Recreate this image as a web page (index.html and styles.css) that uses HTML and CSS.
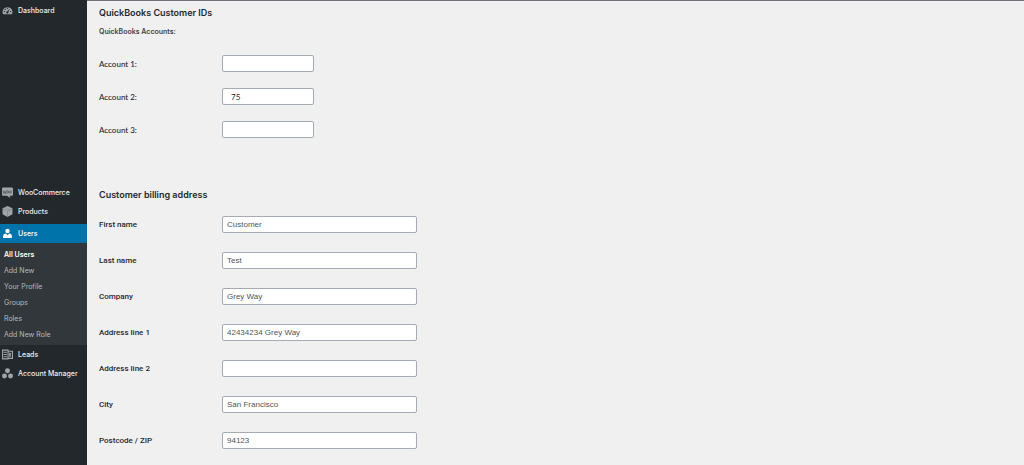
FILE: index.html
```html
<!DOCTYPE html>
<html lang="en">

<head>
    <meta charset="UTF-8">
    <meta name="viewport" content="width=device-width, initial-scale=1.0">
    <title>Edit User</title>
    <link rel="stylesheet" href="styles.css">
</head>

<body>
    <nav class="admin-menu">
        <ul class="menu menu-top">
            <li>
                <a href="#">
                    <svg class="icon" viewBox="0 0 20 20"><path d="M2 17a9 9 0 1 1 16 0z"/><g fill="#23282d"><circle cx="4.5" cy="12" r="1.2"/><circle cx="6" cy="8" r="1.2"/><circle cx="10" cy="6" r="1.2"/><circle cx="15.5" cy="12" r="1.2"/><path d="M14.500 6.500l-3 6a2 2 0 1 1-2-1z"/></g></svg>
                    Dashboard
                </a>
            </li>
        </ul>
        <ul class="menu">
            <li>
                <a href="#">
                    <svg class="icon" viewBox="0 0 20 20"><path d="M2 1h16a2 2 0 0 1 2 2v11a2 2 0 0 1-2 2h-4l1 4-6-4H2a2 2 0 0 1-2-2V3a2 2 0 0 1 2-2z"/><path d="M2 6l1.500 6L5 8l1.500 4L8 6M9 9a1.500 2.500 0 1 0 3 0 1.500 2.500 0 1 0-3 0M14 9a1.500 2.500 0 1 0 3 0 1.500 2.500 0 1 0-3 0" fill="none" stroke="#555a60" stroke-width="1.500"/></svg>
                    WooCommerce
                </a>
            </li>
            <li>
                <a href="#">
                    <svg class="icon" viewBox="0 0 20 20"><path d="M10 0l9 4v11l-9 5-9-5V4z"/><path d="M1 5l9 4 9-4M10 9v11M5 2l9 5v3" fill="none" stroke="#7c8187"/></svg>
                    Products
                </a>
            </li>
            <li class="current">
                <a href="#">
                    <svg class="icon" viewBox="0 0 20 20"><circle cx="10" cy="5.500" r="4"/><path d="M2 18v-3c0-3 2-5 5-5l3 3 3-3c3 0 5 2 5 5v3z"/></svg>
                    Users
                </a>
                <ul class="submenu">
                    <li><a class="active" href="#">All Users</a></li>
                    <li><a href="#">Add New</a></li>
                    <li><a href="#">Your Profile</a></li>
                    <li><a href="#">Groups</a></li>
                    <li><a href="#">Roles</a></li>
                    <li><a href="#">Add New Role</a></li>
                </ul>
            </li>
            <li>
                <a href="#">
                    <svg class="icon" viewBox="0 0 20 20"><path d="M1 2h10v16H1zM11 4h8v13h-8" fill="none" stroke="#a0a5aa" stroke-width="2"/><path d="M3 5h6v2H3zM3 9h6v2H3zM3 13h6v2H3zM13 7h3v7h-3z"/></svg>
                    Leads
                </a>
            </li>
            <li>
                <a href="#">
                    <svg class="icon" viewBox="0 0 20 20"><circle cx="10" cy="5" r="4.500"/><circle cx="4.500" cy="14.500" r="4.500"/><circle cx="15.500" cy="14.500" r="4.500"/></svg>
                    Account Manager
                </a>
            </li>
        </ul>
    </nav>

    <main class="content">
        <form>
            <section class="accounts">
                <h2>QuickBooks Customer IDs</h2>
                <h3>QuickBooks Accounts:</h3>
                <div class="row">
                    <label for="account1">Account 1:</label>
                    <input id="account1" type="text" value="">
                </div>
                <div class="row">
                    <label for="account2">Account 2:</label>
                    <input id="account2" type="text" value="75">
                </div>
                <div class="row">
                    <label for="account3">Account 3:</label>
                    <input id="account3" type="text" value="">
                </div>
            </section>

            <section class="billing">
                <h2>Customer billing address</h2>
                <div class="row">
                    <label for="first-name">First name</label>
                    <input id="first-name" type="text" value="Customer">
                </div>
                <div class="row">
                    <label for="last-name">Last name</label>
                    <input id="last-name" type="text" value="Test">
                </div>
                <div class="row">
                    <label for="company">Company</label>
                    <input id="company" type="text" value="Grey Way">
                </div>
                <div class="row">
                    <label for="address1">Address line 1</label>
                    <input id="address1" type="text" value="42434234 Grey Way">
                </div>
                <div class="row">
                    <label for="address2">Address line 2</label>
                    <input id="address2" type="text" value="">
                </div>
                <div class="row">
                    <label for="city">City</label>
                    <input id="city" type="text" value="San Francisco">
                </div>
                <div class="row">
                    <label for="postcode">Postcode / ZIP</label>
                    <input id="postcode" type="text" value="94123">
                </div>
            </section>
        </form>
    </main>
</body>

</html>
```
FILE: styles.css
```css
* {
    box-sizing: border-box;
}

body {
    display: flex;
    min-height: 100vh;
    margin: 0;
    background: #f0f0f0;
    color: #23282d;
    font-family: Inter, "Liberation Sans", sans-serif;
    font-size: 7px;
}

ul {
    list-style: none;
    margin: 0;
    padding: 0;
}

/* sidebar */
.admin-menu {
    flex: 0 0 87px;
    padding-top: 1px;
    background: #23282d;
}

.menu-top {
    margin-bottom: 163px;
}

.menu a {
    display: flex;
    align-items: center;
    gap: 5px;
    height: 19px;
    padding-left: 2px;
    color: #eee;
    font-weight: 500;
    text-decoration: none;
    white-space: nowrap;
}

.icon {
    flex: none;
    width: 11px;
    height: 11px;
    fill: #a0a5aa;
}

.menu .current {
    margin: 3px 0 0;
}

.current > a {
    background: #0073aa;
    color: #fff;
}

.current .icon {
    fill: #fff;
}

.submenu {
    padding: 3px 0;
    background: #32373c;
}

.menu .submenu a {
    height: 16px;
    padding-left: 4px;
    color: #b4b9be;
    font-weight: 400;
}

.menu .submenu .active {
    color: #fff;
    font-weight: 600;
}

/* profile form */
.content {
    flex: 1;
    padding: 4px 12px;
    border-top: 1px solid #70747a;
}

h2 {
    margin: 0;
    font-size: 9px;
    line-height: 16px;
    font-weight: 600;
}

h3 {
    margin: 4px 0 8px;
    font-size: 7px;
    line-height: 14px;
    font-weight: 600;
    color: #444;
}

.row {
    display: grid;
    grid-template-columns: 123px minmax(0, 195px);
    align-items: center;
    height: 36px;
}

.row label {
    font-family: Roboto, sans-serif;
    font-size: 8px;
    font-weight: 500;
}

.row input {
    width: 100%;
    height: 17px;
    padding: 0 4px;
    border: 1px solid #a4abb3;
    border-radius: 2px;
    background: #fff;
    color: #50555a;
    font-family: "Liberation Sans", Arial, sans-serif;
    font-size: 8px;
}

.accounts {
    margin-bottom: 41px;
}

.accounts .row {
    grid-template-columns: 123px minmax(0, 92px);
    height: 33px;
}

.accounts .row label,
.accounts .row input {
    font-family: Lato, sans-serif;
}

.accounts .row input {
    padding: 0 8px;
    color: #23282d;
}

.billing h2 {
    margin-bottom: 3px;
}
```
